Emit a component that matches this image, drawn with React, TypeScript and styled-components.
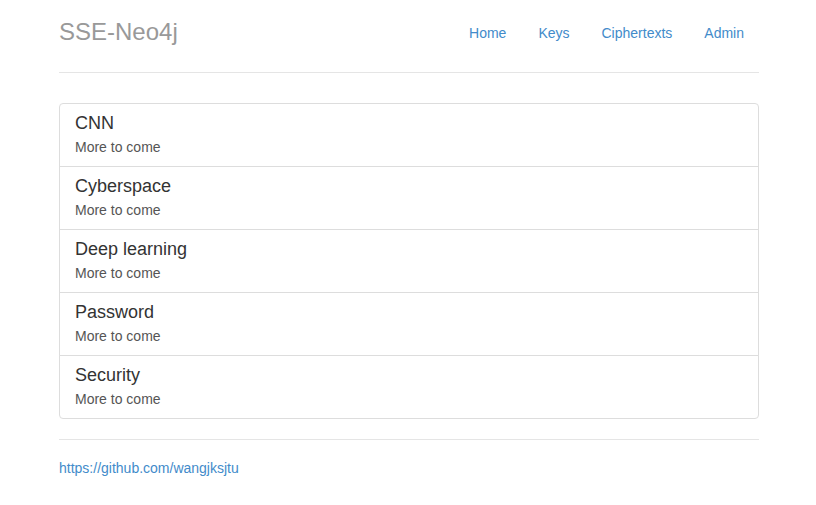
import styled, { createGlobalStyle } from "styled-components";

const GlobalStyle = createGlobalStyle`
  * { box-sizing: border-box; }
  body {
    margin: 0;
    padding: 12px 0 20px 2px;
    font-family: "Liberation Sans", Arial, sans-serif;
    font-size: 14px;
    line-height: 1.42857;
    color: #333;
    background: #fff;
  }
`;

const topics = ["CNN", "Cyberspace", "Deep learning", "Password", "Security"];
const links = ["Home", "Keys", "Ciphertexts", "Admin"];

export default function App() {
  return (
    <>
      <GlobalStyle />
      <Container>
        <Header>
          <Brand>SSE-Neo4j</Brand>
          <Nav>
            {links.map((l) => (
              <NavLink key={l} href="#">
                {l}
              </NavLink>
            ))}
          </Nav>
        </Header>

        <ListGroup>
          {topics.map((t) => (
            <ListItem key={t} href="#">
              <ItemHeading>{t}</ItemHeading>
              <ItemText>More to come</ItemText>
            </ListItem>
          ))}
        </ListGroup>

        <Footer>
          <FooterText>
            <FooterLink href="#">https://github.com/wangjksjtu</FooterLink>
          </FooterText>
        </Footer>
      </Container>
    </>
  );
}

const Container = styled.div`
  width: 700px;
  margin: 0 auto;
`;

const Header = styled.div`
  display: flex;
  justify-content: space-between;
  align-items: center;
  padding-bottom: 20px;
  border-bottom: 1px solid #e5e5e5;
  margin-bottom: 30px;
`;

const Brand = styled.h3`
  margin: 0;
  font-size: 24px;
  font-weight: 500;
  line-height: 40px;
  color: #999;
`;

const Nav = styled.nav`
  display: flex;
  gap: 2px;
`;

const NavLink = styled.a`
  display: block;
  padding: 11px 15px 9px;
  line-height: 20px;
  color: #428bca;
  text-decoration: none;
  border-radius: 4px;
`;

const ListGroup = styled.div`
  display: flex;
  flex-direction: column;
  margin-bottom: 20px;
`;

const ListItem = styled.a`
  display: block;
  padding: 10px 15px;
  margin-bottom: -1px;
  border: 1px solid #ddd;
  background: #fff;
  color: #555;
  text-decoration: none;
  &:first-child {
    border-top-left-radius: 4px;
    border-top-right-radius: 4px;
  }
  &:last-child {
    margin-bottom: 0;
    border-bottom-left-radius: 4px;
    border-bottom-right-radius: 4px;
  }
`;

const ItemHeading = styled.h4`
  margin: 0 0 5px;
  font-size: 18px;
  font-weight: 500;
  line-height: 19px;
  color: #333;
`;

const ItemText = styled.p`
  margin: 0;
  line-height: 18px;
`;

const Footer = styled.footer`
  padding-top: 19px;
  border-top: 1px solid #e5e5e5;
  color: #777;
`;

const FooterText = styled.p`
  margin: 0 0 10px;
`;

const FooterLink = styled.a`
  color: #428bca;
  text-decoration: none;
`;
